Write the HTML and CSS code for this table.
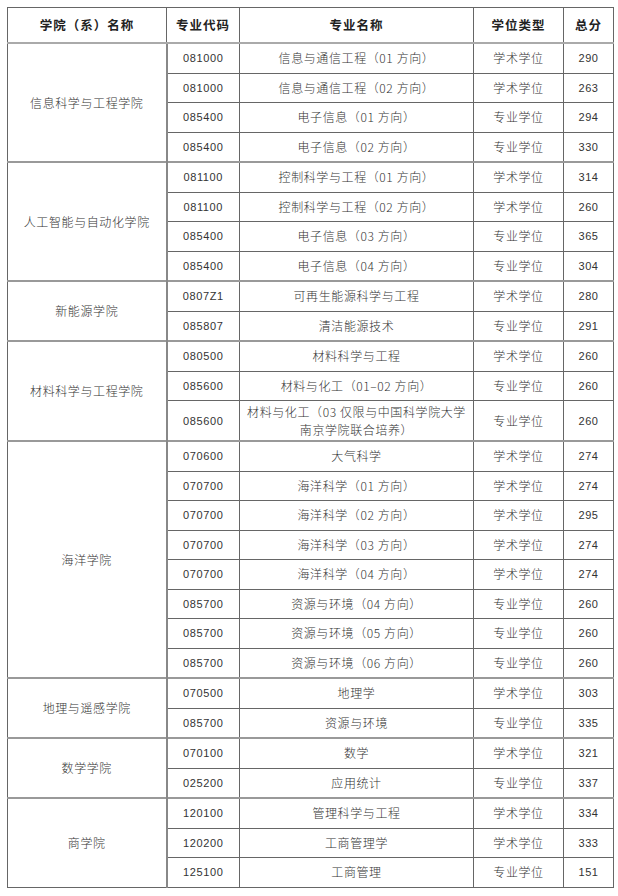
FILE: index.html
```html
<!DOCTYPE html>
<html lang="zh-CN">
<head>
<meta charset="utf-8">
<title>专业总分</title>
<link rel="stylesheet" href="styles.css">
</head>
<body>
<div class="page">
<table class="scores">
  <colgroup>
    <col class="c-school"><col class="c-code"><col class="c-major"><col class="c-type"><col class="c-total">
  </colgroup>
  <thead>
    <tr><th>学院（系）名称</th><th>专业代码</th><th>专业名称</th><th>学位类型</th><th>总分</th></tr>
  </thead>
  <tbody>
    <tr class="first"><td rowspan="4" class="school">信息科学与工程学院</td><td class="num">081000</td><td>信息与通信工程（01 方向）</td><td>学术学位</td><td class="num">290</td></tr>
    <tr><td class="num">081000</td><td>信息与通信工程（02 方向）</td><td>学术学位</td><td class="num">263</td></tr>
    <tr><td class="num">085400</td><td>电子信息（01 方向）</td><td>专业学位</td><td class="num">294</td></tr>
    <tr><td class="num">085400</td><td>电子信息（02 方向）</td><td>专业学位</td><td class="num">330</td></tr>

    <tr class="grp"><td rowspan="4" class="school">人工智能与自动化学院</td><td class="num">081100</td><td>控制科学与工程（01 方向）</td><td>学术学位</td><td class="num">314</td></tr>
    <tr><td class="num">081100</td><td>控制科学与工程（02 方向）</td><td>学术学位</td><td class="num">260</td></tr>
    <tr><td class="num">085400</td><td>电子信息（03 方向）</td><td>专业学位</td><td class="num">365</td></tr>
    <tr><td class="num">085400</td><td>电子信息（04 方向）</td><td>专业学位</td><td class="num">304</td></tr>

    <tr class="grp"><td rowspan="2" class="school">新能源学院</td><td class="num">0807Z1</td><td>可再生能源科学与工程</td><td>学术学位</td><td class="num">280</td></tr>
    <tr><td class="num">085807</td><td>清洁能源技术</td><td>专业学位</td><td class="num">291</td></tr>

    <tr class="grp"><td rowspan="3" class="school">材料科学与工程学院</td><td class="num">080500</td><td>材料科学与工程</td><td>学术学位</td><td class="num">260</td></tr>
    <tr><td class="num">085600</td><td>材料与化工（01–02 方向）</td><td>专业学位</td><td class="num">260</td></tr>
    <tr class="tall"><td class="num">085600</td><td class="wrap">材料与化工（03 仅限与中国科学院大学<br>南京学院联合培养）</td><td>专业学位</td><td class="num">260</td></tr>

    <tr class="grp"><td rowspan="8" class="school">海洋学院</td><td class="num">070600</td><td>大气科学</td><td>学术学位</td><td class="num">274</td></tr>
    <tr><td class="num">070700</td><td>海洋科学（01 方向）</td><td>学术学位</td><td class="num">274</td></tr>
    <tr><td class="num">070700</td><td>海洋科学（02 方向）</td><td>学术学位</td><td class="num">295</td></tr>
    <tr><td class="num">070700</td><td>海洋科学（03 方向）</td><td>学术学位</td><td class="num">274</td></tr>
    <tr><td class="num">070700</td><td>海洋科学（04 方向）</td><td>学术学位</td><td class="num">274</td></tr>
    <tr><td class="num">085700</td><td>资源与环境（04 方向）</td><td>专业学位</td><td class="num">260</td></tr>
    <tr><td class="num">085700</td><td>资源与环境（05 方向）</td><td>专业学位</td><td class="num">260</td></tr>
    <tr><td class="num">085700</td><td>资源与环境（06 方向）</td><td>专业学位</td><td class="num">260</td></tr>

    <tr class="grp"><td rowspan="2" class="school">地理与遥感学院</td><td class="num">070500</td><td>地理学</td><td>学术学位</td><td class="num">303</td></tr>
    <tr><td class="num">085700</td><td>资源与环境</td><td>专业学位</td><td class="num">335</td></tr>

    <tr class="grp"><td rowspan="2" class="school">数学学院</td><td class="num">070100</td><td>数学</td><td>学术学位</td><td class="num">321</td></tr>
    <tr><td class="num">025200</td><td>应用统计</td><td>专业学位</td><td class="num">337</td></tr>

    <tr class="grp"><td rowspan="3" class="school">商学院</td><td class="num">120100</td><td>管理科学与工程</td><td>学术学位</td><td class="num">334</td></tr>
    <tr><td class="num">120200</td><td>工商管理学</td><td>学术学位</td><td class="num">333</td></tr>
    <tr><td class="num">125100</td><td>工商管理</td><td>专业学位</td><td class="num">151</td></tr>
  </tbody>
</table>
</div>
</body>
</html>
```

FILE: styles.css
```css
html, body {
  margin: 0;
  padding: 0;
  background: #ffffff;
}

.page {
  padding: 7px 0 0 7px;
}

.scores {
  border-collapse: collapse;
  table-layout: fixed;
  width: 606px;
  font-family: "Noto Sans CJK SC", "Liberation Sans", sans-serif;
  font-size: 12px;
  font-weight: 300;
  color: #333;
  border: 1px solid #555;
}

.c-school { width: 159px; }
.c-code { width: 73px; }
.c-major { width: 234px; }
.c-type { width: 90px; }
.c-total { width: 50px; }

.scores th,
.scores td {
  border: 1px solid #666;
  text-align: center;
  vertical-align: middle;
  padding: 0;
  line-height: 16px;
  letter-spacing: 0.6px;
  white-space: nowrap;
}

.scores th {
  height: 34px;
  font-weight: bold;
  font-size: 12.5px;
  letter-spacing: 1px;
  color: #222;
  border-bottom: 2px solid #aaa;
}

.scores td {
  height: 28.5px;
}

.scores tr.tall td {
  height: 39px;
}

.scores td.wrap {
  line-height: 18px;
}

.scores tr.grp td {
  border-top: 2px solid #999;
}

.scores td.school {
  border-right: 2px solid #888;
}

.scores td.num {
  font-family: "Liberation Sans", sans-serif;
  font-weight: normal;
  font-size: 11px;
  letter-spacing: 0.6px;
}
```
